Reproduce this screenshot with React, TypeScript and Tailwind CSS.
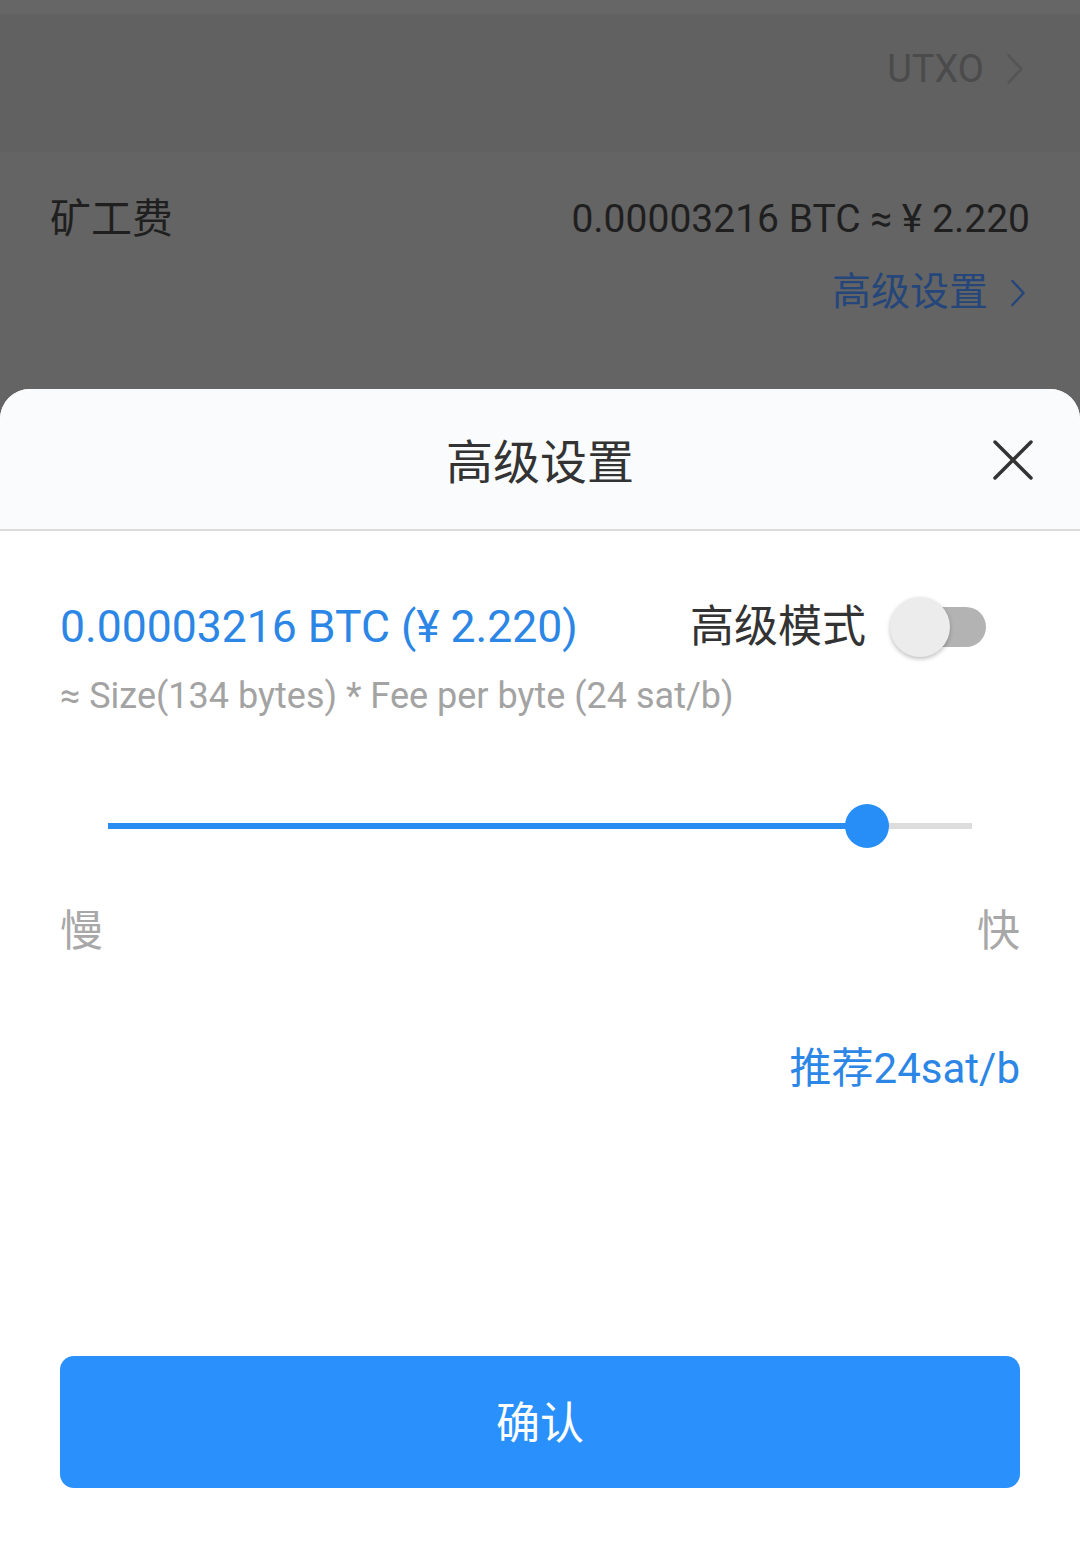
import React from "react";

const F = { fontFamily: 'Roboto, "Noto Sans CJK SC", sans-serif' };

function Chevron({ className, color }: { className?: string; color: string }) {
  return (
    <svg className={className} viewBox="0 0 20 36" fill="none">
      <path d="M3 3 L17 18 L3 33" stroke={color} strokeWidth="3" strokeLinecap="round" strokeLinejoin="round" />
    </svg>
  );
}

export default function App() {
  return (
    <div className="w-[1080px] h-[1560px] flex flex-col bg-[#646464] overflow-hidden" style={F}>
      {/* dimmed background page */}
      <div className="h-[14px] bg-[#666666]" />
      <div className="h-[138px] bg-[#616161] flex items-center justify-end pr-[56px] pb-[28px]">
        <span className="text-[38px] text-[#4b4b4b] leading-none">UTXO</span>
        <Chevron className="w-[18px] h-[34px] ml-[22px]" color="#555555" />
      </div>
      <div className="h-[237px] bg-[#646464] flex flex-col px-[50px] pt-[47px]">
        <div className="flex items-center justify-between">
          <span className="text-[41px] text-[#1f1f1f] leading-none">矿工费</span>
          <span className="text-[39px] text-[#1f1f1f] leading-none">0.00003216 BTC ≈ ¥ 2.220</span>
        </div>
        <div className="flex items-center justify-end mt-[33px] pr-[4px]">
          <span className="text-[39px] text-[#24467a] leading-none">高级设置</span>
          <Chevron className="w-[16px] h-[30px] ml-[22px]" color="#24467a" />
        </div>
      </div>

      {/* bottom sheet */}
      <div className="flex-1 bg-white rounded-t-[30px] flex flex-col overflow-hidden">
        <div className="h-[142px] bg-[#fafbfc] border-b-2 border-[#dcdcdc] relative flex items-center justify-center">
          <span className="text-[47px] text-[#333333] leading-none mt-[6px]">高级设置</span>
          <svg className="absolute right-[46px] top-[50px] w-[42px] h-[42px]" viewBox="0 0 42 42" fill="none">
            <path d="M3 3 L39 39 M39 3 L3 39" stroke="#333333" strokeWidth="3.5" strokeLinecap="round" />
          </svg>
        </div>

        <div className="flex flex-col px-[60px]">
          <div className="flex items-center justify-between mt-[66px] h-[60px]">
            <span className="text-[44.5px] text-[#2b86e6] leading-none">0.00003216 BTC (¥ 2.220)</span>
            <div className="flex items-center mr-[34px]">
              <span className="text-[44px] text-[#333333] leading-none">高级模式</span>
              <div className="relative w-[96px] h-[60px] ml-[24px] flex items-center">
                <div className="absolute left-[10px] right-0 h-[40px] rounded-full bg-[#b3b3b3]" />
                <div className="absolute left-0 top-0 w-[60px] h-[60px] rounded-full bg-[#ececec] shadow-[0_2px_4px_rgba(0,0,0,0.25)]" />
              </div>
            </div>
          </div>
          <div className="mt-[21px] text-[36px] text-[#a3a3a3] leading-none">≈ Size(134 bytes) * Fee per byte (24 sat/b)</div>

          <div className="mt-[90px] mx-[48px] relative h-[44px] flex items-center">
            <div className="w-full h-[6px] bg-[#dddddd] flex">
              <div className="w-[760px] h-full bg-[#2a8cf0]" />
            </div>
            <div className="absolute left-[737px] top-0 w-[44px] h-[44px] rounded-full bg-[#278ef7]" />
          </div>

          <div className="mt-[62px] flex justify-between text-[43px] text-[#a8a8a8] leading-none">
            <span>慢</span>
            <span>快</span>
          </div>

          <div className="mt-[95px] flex justify-end">
            <span className="text-[42px] text-[#2b86e6] leading-none">推荐24sat/b</span>
          </div>

          <button className="mt-[266px] h-[132px] w-full rounded-[14px] bg-[#2990fc] text-white text-[44px] leading-none pt-[4px]" style={F}>
            确认
          </button>
        </div>
      </div>
    </div>
  );
}
